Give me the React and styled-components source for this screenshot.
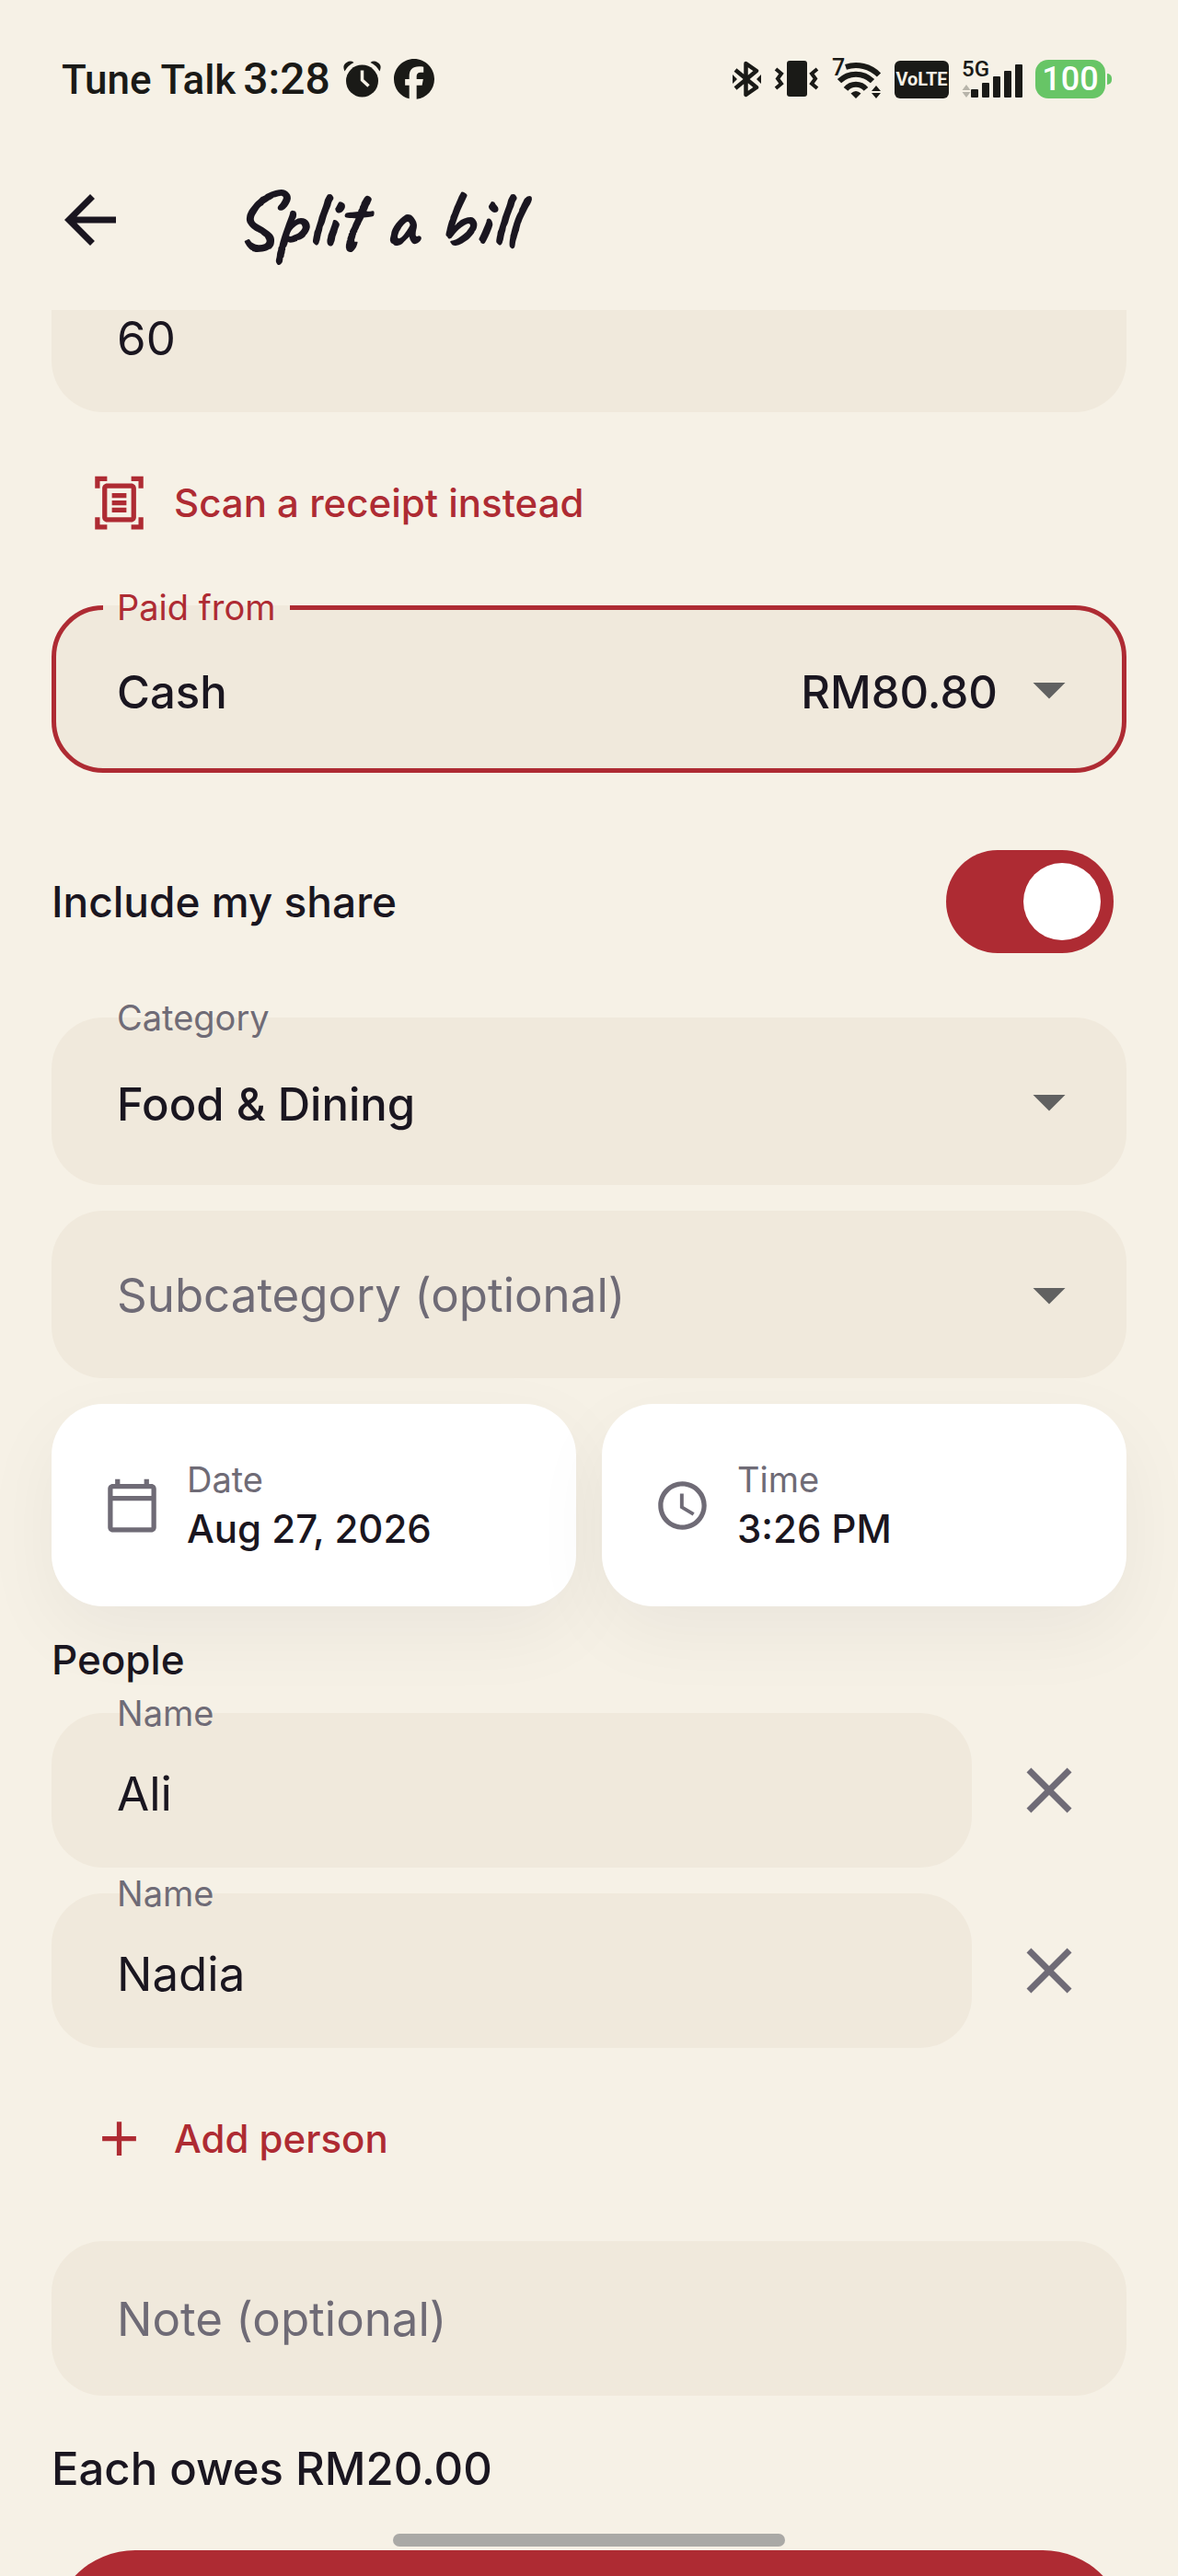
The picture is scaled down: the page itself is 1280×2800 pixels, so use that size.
import React, {useLayoutEffect, useRef, useState} from 'react';
import styled, {createGlobalStyle} from 'styled-components';
import {
    MdAccessTime,
    MdAdd,
    MdArrowBack,
    MdArrowDropDown,
    MdClose,
    MdOutlineCalendarToday,
    MdOutlineDocumentScanner,
} from 'react-icons/md';
import {FaFacebook} from 'react-icons/fa6';

const page = '#f6f1e6';
const field = '#f0e9dc';
const red = '#ae2b33';
const ink = '#1a1620';
const muted = '#6f6b76';
const statusInk = '#1a1a17';

const GlobalStyle = createGlobalStyle`
    * {
        box-sizing: border-box;
    }
    body {
        margin: 0;
        background: ${page};
        color: ${ink};
        font-family: Inter, "Liberation Sans", sans-serif;
    }
    button, input, select {
        margin: 0;
        padding: 0;
        border: none;
        background: none;
        color: inherit;
        font: inherit;
    }
    svg {
        display: block;
        flex: none;
    }
`;

const Screen = styled.div`
    position: relative;
    display: flex;
    flex-direction: column;
    height: 100vh;
    overflow: hidden;
`;

/* status bar */
const StatusBar = styled.div`
    display: flex;
    flex: none;
    align-items: center;
    justify-content: space-between;
    height: 141px;
    padding: 31px 72px 0 67px;
    color: ${statusInk};
    font-family: Roboto, "Liberation Sans", sans-serif;
    font-weight: 500;
`;
const StatusGroup = styled.div`
    display: flex;
    align-items: center;
    gap: 14px;
`;
const Carrier = styled.span`
    font-size: 44px;
    line-height: 52px;
`;
const Clock = styled.time`
    margin-left: 8px;
    font-size: 48px;
`;
const VolteBadge = styled.span`
    width: 59px;
    border-radius: 6px;
    background: ${statusInk};
    color: ${page};
    font-size: 20px;
    font-weight: 700;
    line-height: 41px;
    text-align: center;
`;
const Battery = styled.div`
    display: flex;
    align-items: center;
    gap: 2px;
`;
const BatteryBody = styled.span`
    width: 76px;
    border-radius: 14px;
    background: #67c566;
    color: white;
    font-size: 36px;
    line-height: 42px;
    text-align: center;
`;
const BatteryTip = styled.span`
    width: 5px;
    height: 12px;
    border-radius: 0 6px 6px 0;
    background: #67c566;
`;

/* header */
const Header = styled.header`
    display: flex;
    flex: none;
    align-items: center;
    gap: 114px;
    height: 196px;
    padding: 0 56px;
`;
const IconButton = styled.button`
    display: flex;
    flex: none;
    align-items: center;
    justify-content: center;
    width: ${props => props.$wide ? '168px' : '84px'};
    height: ${props => props.$wide ? '168px' : '84px'};
    color: ${props => props.$wide ? muted : ink};
    cursor: pointer;
`;
const Title = styled.h1`
    margin: 0;
    font-family: Caveat, Lato, sans-serif;
    font-size: 89px;
    font-weight: 700;
    line-height: 112px;
`;

/* form */
const Form = styled.form`
    display: flex;
    flex: 1;
    flex-direction: column;
    gap: 28px;
    min-height: 0;
    padding: 0 56px 56px;
    overflow-y: auto;
    scrollbar-width: none;
    > * {
        flex: none;
    }
`;
const Field = styled.div`
    position: relative;
    display: flex;
    flex: ${props => props.$grow ? '1' : 'none'};
    align-items: center;
    height: ${props => props.$tall ? '182px' : '168px'};
    padding: 0 37px 0 66px;
    border: 5px solid ${props => props.$active ? red : 'transparent'};
    border-radius: 56px;
    background: ${field} border-box;
`;
const FieldLabel = styled.label`
    position: absolute;
    top: ${props => props.$active ? '-25px' : '-27px'};
    left: 51px;
    padding: 0 15px;
    background: ${props => props.$active ? `linear-gradient(${page} 20px, ${field} 20px)` : 'none'};
    color: ${props => props.$active ? red : muted};
    font-size: 38px;
    line-height: 44px;
`;
const TextInput = styled.input`
    flex: 1;
    min-width: 0;
    height: 100%;
    padding-top: ${props => props.$raised ? '0' : '6px'};
    font-size: 51px;
    outline: none;
    &::placeholder {
        color: ${muted};
        opacity: 1;
    }
`;
const Select = styled.select`
    flex: 1;
    min-width: 0;
    height: 100%;
    padding-top: ${props => props.$empty ? '0' : '6px'};
    appearance: none;
    outline: none;
    color: ${props => props.$empty ? muted : ink};
    font-size: ${props => props.$empty ? '51px' : '49px'};
    font-weight: ${props => props.$empty ? 400 : 500};
`;
const Balance = styled.output`
    padding: 6px 14px 0 0;
    font-size: 49px;
    font-weight: 500;
`;
const TextButton = styled.button`
    display: flex;
    align-items: center;
    align-self: flex-start;
    gap: 28px;
    height: 168px;
    margin-top: -14px;
    padding: 0 42px;
    color: ${red};
    font-size: 42px;
    font-weight: 500;
    cursor: pointer;
`;
const SwitchRow = styled.div`
    display: flex;
    align-items: center;
    justify-content: space-between;
    height: 196px;
    margin-top: 14px;
    padding-right: 14px;
    font-size: 46px;
    font-weight: 500;
`;
const Switch = styled.input`
    display: flex;
    align-items: center;
    justify-content: ${props => props.checked ? 'flex-end' : 'flex-start'};
    width: 182px;
    height: 112px;
    padding: 14px;
    appearance: none;
    border-radius: 56px;
    background: ${props => props.checked ? red : muted};
    cursor: pointer;
    &::before {
        content: '';
        width: 84px;
        height: 84px;
        border-radius: 50%;
        background: white;
    }
`;
const CardRow = styled.div`
    display: grid;
    grid-template-columns: 1fr 1fr;
    gap: 28px;
`;
const Card = styled.button`
    display: flex;
    align-items: center;
    gap: 28px;
    height: 220px;
    padding: 0 56px;
    border-radius: 56px;
    background: white;
    box-shadow: 0 28px 84px rgba(26, 22, 32, .05);
    text-align: left;
    cursor: pointer;
    svg {
        color: ${muted};
    }
`;
const CardText = styled.span`
    display: flex;
    flex-direction: column;
`;
const CardLabel = styled.span`
    color: ${muted};
    font-size: 38px;
    line-height: 52px;
`;
const CardValue = styled.span`
    font-size: 42px;
    font-weight: 500;
    line-height: 56px;
`;
const SectionTitle = styled.h2`
    margin: 0;
    font-size: 44px;
    font-weight: 500;
    line-height: 60px;
`;
const PersonRow = styled.div`
    display: flex;
    align-items: center;
`;
const Summary = styled.p`
    margin: 0;
    padding-bottom: 8px;
    font-size: 49px;
    font-weight: 500;
    line-height: 104px;
`;
const SaveButton = styled.button`
    height: 182px;
    border-radius: 91px;
    background: ${red};
    cursor: pointer;
`;
const HomeIndicator = styled.div`
    position: absolute;
    right: 0;
    bottom: 32px;
    left: 0;
    width: 426px;
    height: 14px;
    margin: 0 auto;
    border-radius: 7px;
    background: #aaa9a6;
`;

const AlarmIcon = () => (
    <svg width="41" height="40" viewBox="0 0 41 40">
        <circle cx="20.5" cy="22" r="17.5" fill={statusInk}/>
        <path d="M1.5 11.5Q-1.5 5 3.5 2Q8-.8 11.5 2Q5 5 1.5 11.5zM39.5 11.5Q42.5 5 37.5 2Q33-.8 29.5 2Q36 5 39.5 11.5z" fill={statusInk}/>
        <path d="M20.5 10.5V21L27.5 27.5" fill="none" stroke={page} strokeWidth="3.5"/>
    </svg>
);

const BluetoothIcon = () => (
    <svg width="31" height="40" viewBox="0 0 31 40">
        <path d="M3 10L26 29L14.5 37V3L26 11L3 30" fill="none" stroke={statusInk} strokeWidth="4.5" strokeLinejoin="round"/>
        <path d="M0 15l5 5l-5 5zM31 15l-5 5l5 5z" fill={statusInk}/>
    </svg>
);

const VibrateIcon = () => (
    <svg width="49" height="40" viewBox="0 0 49 40">
        <rect x="14" width="22" height="39" rx="3" fill={statusInk}/>
        <path d="M2 9L8 14L4 19.5L8 25L2 30M47 9L41 14L45 19.5L41 25L47 30" fill="none" stroke={statusInk} strokeWidth="4"/>
    </svg>
);

const WifiIcon = () => (
    <svg width="54" height="62" viewBox="0 -8 54 62">
        <text x="0" y="19" fontSize="25" fontWeight="500" fill={statusInk}>7</text>
        <g fill="none" stroke={statusInk} strokeWidth="6">
            <path d="M15 9.8A35 35 0 0 1 51 18.5"/>
            <path d="M8 25.2A25.3 25.3 0 0 1 44 25.2"/>
            <path d="M15 33.8A14.3 14.3 0 0 1 37 33.8"/>
        </g>
        <path d="M26 44L20.5 38.5Q26 33.5 31.5 38.5zM48 30l5 6h-10zM48 44l5-6h-10z" fill={statusInk}/>
    </svg>
);

const SignalIcon = () => (
    <svg width="66" height="60" viewBox="0 -8 66 60">
        <text x="0" y="19" fontSize="24" fontWeight="500" fill={statusInk}>5G</text>
        <path d="M5 28l4.5 6h-9zM5 42l4.5-6h-9z" fill="#b7b4aa"/>
        <g fill={statusInk}>
            <rect x="10" y="33" width="8" height="9" rx="1"/>
            <rect x="22" y="26" width="8" height="16" rx="1"/>
            <rect x="34" y="19" width="8" height="23" rx="1"/>
            <rect x="46" y="13" width="8" height="29" rx="1"/>
            <rect x="58" y="6" width="8" height="36" rx="1"/>
        </g>
    </svg>
);

const App = () => {
    const formRef = useRef(null);
    const [amount, setAmount] = useState('60');
    const [includeMe, setIncludeMe] = useState(true);
    const [people, setPeople] = useState(['Ali', 'Nadia']);

    // open just past the top of the amount field
    useLayoutEffect(() => {
        formRef.current.scrollTop = 57;
    }, []);

    const rename = (index, name) => setPeople(people.map((p, i) => i === index ? name : p));
    const remove = index => setPeople(people.filter((p, i) => i !== index));

    return (
        <Screen>
            <GlobalStyle/>
            <StatusBar>
                <StatusGroup>
                    <Carrier>Tune Talk<Clock>3:28</Clock></Carrier>
                    <AlarmIcon/>
                    <FaFacebook size={44}/>
                </StatusGroup>
                <StatusGroup>
                    <BluetoothIcon/>
                    <VibrateIcon/>
                    <WifiIcon/>
                    <VolteBadge>VoLTE</VolteBadge>
                    <SignalIcon/>
                    <Battery>
                        <BatteryBody>100</BatteryBody>
                        <BatteryTip/>
                    </Battery>
                </StatusGroup>
            </StatusBar>
            <Header>
                <IconButton type="button" aria-label="Back"><MdArrowBack size={84}/></IconButton>
                <Title>Split a bill</Title>
            </Header>
            <Form ref={formRef} onSubmit={e => e.preventDefault()}>
                <Field>
                    <TextInput aria-label="Amount" value={amount} onChange={e => setAmount(e.target.value)}/>
                </Field>
                <TextButton type="button">
                    <MdOutlineDocumentScanner size={63}/>
                    Scan a receipt instead
                </TextButton>
                <Field $tall $active>
                    <FieldLabel htmlFor="account" $active>Paid from</FieldLabel>
                    <Select id="account">
                        <option>Cash</option>
                    </Select>
                    <Balance htmlFor="account">RM80.80</Balance>
                    <MdArrowDropDown size={84} color="#616161"/>
                </Field>
                <SwitchRow>
                    <label htmlFor="include">Include my share</label>
                    <Switch
                        id="include"
                        type="checkbox"
                        role="switch"
                        checked={includeMe}
                        onChange={e => setIncludeMe(e.target.checked)}
                    />
                </SwitchRow>
                <Field $tall>
                    <FieldLabel htmlFor="category">Category</FieldLabel>
                    <Select id="category">
                        <option>Food &amp; Dining</option>
                    </Select>
                    <MdArrowDropDown size={84} color="#616161"/>
                </Field>
                <Field $tall>
                    <Select aria-label="Subcategory" $empty>
                        <option>Subcategory (optional)</option>
                    </Select>
                    <MdArrowDropDown size={84} color="#616161"/>
                </Field>
                <CardRow>
                    <Card type="button">
                        <MdOutlineCalendarToday size={63}/>
                        <CardText>
                            <CardLabel>Date</CardLabel>
                            <CardValue>Aug 27, 2026</CardValue>
                        </CardText>
                    </Card>
                    <Card type="button">
                        <MdAccessTime size={63}/>
                        <CardText>
                            <CardLabel>Time</CardLabel>
                            <CardValue>3:26 PM</CardValue>
                        </CardText>
                    </Card>
                </CardRow>
                <SectionTitle>People</SectionTitle>
                {people.map((name, index) => (
                    <PersonRow key={index}>
                        <Field $grow>
                            <FieldLabel htmlFor={`person-${index}`}>Name</FieldLabel>
                            <TextInput
                                id={`person-${index}`}
                                value={name}
                                onChange={e => rename(index, e.target.value)}
                            />
                        </Field>
                        <IconButton type="button" $wide aria-label="Remove person" onClick={() => remove(index)}>
                            <MdClose size={84}/>
                        </IconButton>
                    </PersonRow>
                ))}
                <TextButton type="button" onClick={() => setPeople([...people, ''])}>
                    <MdAdd size={63}/>
                    Add person
                </TextButton>
                <Field>
                    <TextInput aria-label="Note" placeholder="Note (optional)" $raised/>
                </Field>
                <Summary>Each owes RM20.00</Summary>
                <SaveButton type="submit" aria-label="Split bill"/>
            </Form>
            <HomeIndicator/>
        </Screen>
    );
};

export default App;
